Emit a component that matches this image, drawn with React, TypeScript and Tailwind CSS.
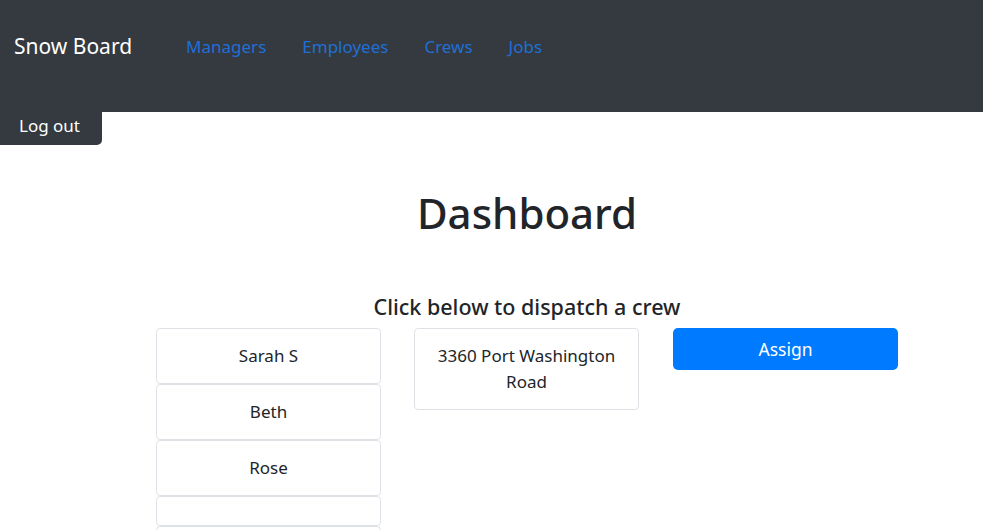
import type { FC } from "react";

const crew = ["Sarah S", "Beth", "Rose", "", ""];

const NameCard: FC<{ name: string }> = ({ name }) => (
  <div className="rounded-[4px] border border-[#dee2e6] px-4 py-[14px] text-center text-[17px] leading-[26px] text-[#212529]">
    {name}
  </div>
);

const App: FC = () => {
  return (
    <div className="min-h-[530px] bg-white font-['Noto_Sans','Open_Sans',sans-serif]">
      {/* Navbar */}
      <nav className="flex h-[112px] items-center bg-[#343a40] px-[14px] pb-[18px]">
        <span className="mr-[54px] text-[21px] text-white">Snow Board</span>
        <div className="flex gap-[36px] text-[17px] text-[#1f6fd6]">
          <span>Managers</span>
          <span>Employees</span>
          <span>Crews</span>
          <span>Jobs</span>
        </div>
      </nav>

      <button className="flex h-[33px] w-[102px] items-center rounded-br-[5px] bg-[#343a40] pb-[5px] pl-[19px] text-[17px] text-white">
        Log out
      </button>

      <main className="flex flex-col items-center pl-[71px]">
        <h1 className="mt-[43px] text-[42px] font-medium leading-[1.2] text-[#212529]">Dashboard</h1>
        <h4 className="mt-[56px] text-[21.5px] font-medium leading-[1.2] text-[#212529]">
          Click below to dispatch a crew
        </h4>
        <div className="mt-[8px] flex items-start">
          <div className="flex w-[225px] flex-col">
            {crew.map((name, i) => (
              <NameCard key={i} name={name} />
            ))}
          </div>
          <div className="ml-[33px] w-[225px] rounded-[4px] border border-[#dee2e6] px-4 py-[14px] text-center text-[17px] leading-[26px] text-[#212529]">
            3360 Port Washington Road
          </div>
          <button className="ml-[34px] h-[42px] w-[225px] rounded-[5px] bg-[#007bff] text-[17.5px] text-white">
            Assign
          </button>
        </div>
      </main>
    </div>
  );
};

export default App;
